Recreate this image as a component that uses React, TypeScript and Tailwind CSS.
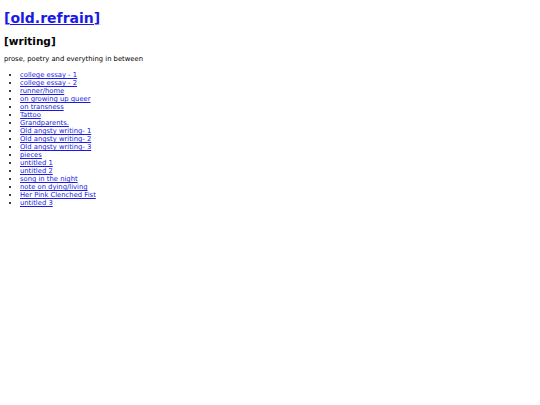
const posts = [
  'college essay - 1',
  'college essay - 2',
  'runner/home',
  'on growing up queer',
  'on transness',
  'Tattoo',
  'Grandparents.',
  'Old angsty writing- 1',
  'Old angsty writing- 2',
  'Old angsty writing- 3',
  'pieces',
  'untitled 1',
  'untitled 2',
  'song in the night',
  'note on dying/living',
  'Her Pink Clenched Fist',
  'untitled 3',
];

export default function App() {
  return (
    <div className="min-h-[405px] bg-white px-1 pt-[8px] text-black" style={{ fontFamily: '"DejaVu Sans", Verdana, sans-serif' }}>
      <h1 className="text-[14px] font-bold leading-[20px]">
        <a href="#" className="text-[#1a1ae6] underline decoration-1">[old.refrain]</a>
      </h1>
      <h2 className="mt-[6px] text-[10.5px] font-bold leading-[14px]">[writing]</h2>
      <p className="mt-[7px] text-[6.8px] leading-[9px]">prose, poetry and everything in between</p>
      <ul className="mt-[7px] list-disc pl-4 text-[6.8px] leading-[8px]">
        {posts.map(p => (
          <li key={p}>
            <a href="#" className="text-[#1a1ae6] underline">{p}</a>
          </li>
        ))}
      </ul>
    </div>
  );
}
